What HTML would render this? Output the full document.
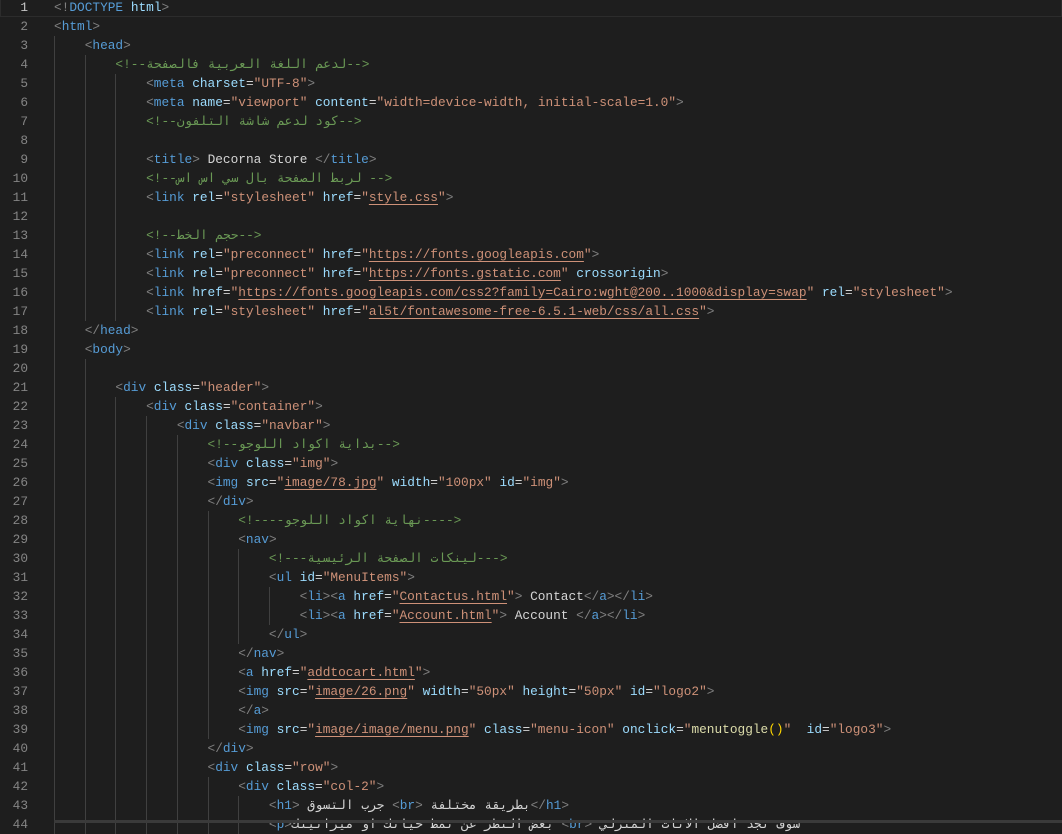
<!DOCTYPE html>
<html><head><meta charset="UTF-8">
<style>
html,body{margin:0;padding:0;background:#1e1e1e;width:1062px;height:823px;overflow:hidden}
#ed{position:absolute;left:0;top:-2px;width:1062px;font-family:"Liberation Mono","DejaVu Sans Mono","DejaVu Sans",monospace;font-size:12.8px}
.l{position:relative;height:19px;line-height:19px;white-space:pre;padding-left:54px;color:#d4d4d4}
.l b{font-weight:normal;position:absolute;left:0;width:28px;text-align:right;color:#858585}
.cur{box-shadow:inset 0 0 0 1px #2c2c2c}
.cur b{color:#c6c6c6}
i{display:inline-block;width:4ch;height:19px;vertical-align:top;box-shadow:inset 1px 0 #404040}
.g{color:#808080}.n{color:#569cd6}.a{color:#9cdcfe}.s{color:#ce9178}.c{color:#6a9955}.f{color:#dcdcaa}.y{color:#ffd700}
.u{text-decoration:underline;text-decoration-color:#ce9178;text-underline-offset:3px}
#sb{position:absolute;left:54px;right:0;top:820px;height:3px;background:#3a3a3a}
</style></head><body><div id="ed">
<div class="l cur"><b>1</b><span class="g">&lt;!</span><span class="n">DOCTYPE</span> <span class="a">html</span><span class="g">&gt;</span></div>
<div class="l"><b>2</b><span class="g">&lt;</span><span class="n">html</span><span class="g">&gt;</span></div>
<div class="l"><b>3</b><i></i><span class="g">&lt;</span><span class="n">head</span><span class="g">&gt;</span></div>
<div class="l"><b>4</b><i></i><i></i><span class="c">&lt;!--لدعم اللغة العربية فالصفحة--&gt;</span></div>
<div class="l"><b>5</b><i></i><i></i><i></i><span class="g">&lt;</span><span class="n">meta</span> <span class="a">charset</span>=<span class="s">"UTF-8"</span><span class="g">&gt;</span></div>
<div class="l"><b>6</b><i></i><i></i><i></i><span class="g">&lt;</span><span class="n">meta</span> <span class="a">name</span>=<span class="s">"viewport"</span> <span class="a">content</span>=<span class="s">"width=device-width, initial-scale=1.0"</span><span class="g">&gt;</span></div>
<div class="l"><b>7</b><i></i><i></i><i></i><span class="c">&lt;!--كود لدعم شاشة التلفون--&gt;</span></div>
<div class="l"><b>8</b><i></i><i></i><i></i></div>
<div class="l"><b>9</b><i></i><i></i><i></i><span class="g">&lt;</span><span class="n">title</span><span class="g">&gt;</span> Decorna Store <span class="g">&lt;/</span><span class="n">title</span><span class="g">&gt;</span></div>
<div class="l"><b>10</b><i></i><i></i><i></i><span class="c">&lt;!--لربط الصفحة بال سي اس اس --&gt;</span></div>
<div class="l"><b>11</b><i></i><i></i><i></i><span class="g">&lt;</span><span class="n">link</span> <span class="a">rel</span>=<span class="s">"stylesheet"</span> <span class="a">href</span>=<span class="s">"<span class="u">style.css</span>"</span><span class="g">&gt;</span></div>
<div class="l"><b>12</b><i></i><i></i><i></i></div>
<div class="l"><b>13</b><i></i><i></i><i></i><span class="c">&lt;!--حجم الخط--&gt;</span></div>
<div class="l"><b>14</b><i></i><i></i><i></i><span class="g">&lt;</span><span class="n">link</span> <span class="a">rel</span>=<span class="s">"preconnect"</span> <span class="a">href</span>=<span class="s">"<span class="u">https://fonts.googleapis.com</span>"</span><span class="g">&gt;</span></div>
<div class="l"><b>15</b><i></i><i></i><i></i><span class="g">&lt;</span><span class="n">link</span> <span class="a">rel</span>=<span class="s">"preconnect"</span> <span class="a">href</span>=<span class="s">"<span class="u">https://fonts.gstatic.com</span>"</span> <span class="a">crossorigin</span><span class="g">&gt;</span></div>
<div class="l"><b>16</b><i></i><i></i><i></i><span class="g">&lt;</span><span class="n">link</span> <span class="a">href</span>=<span class="s">"<span class="u">https://fonts.googleapis.com/css2?family=Cairo:wght@200..1000&amp;display=swap</span>"</span> <span class="a">rel</span>=<span class="s">"stylesheet"</span><span class="g">&gt;</span></div>
<div class="l"><b>17</b><i></i><i></i><i></i><span class="g">&lt;</span><span class="n">link</span> <span class="a">rel</span>=<span class="s">"stylesheet"</span> <span class="a">href</span>=<span class="s">"<span class="u">al5t/fontawesome-free-6.5.1-web/css/all.css</span>"</span><span class="g">&gt;</span></div>
<div class="l"><b>18</b><i></i><span class="g">&lt;/</span><span class="n">head</span><span class="g">&gt;</span></div>
<div class="l"><b>19</b><i></i><span class="g">&lt;</span><span class="n">body</span><span class="g">&gt;</span></div>
<div class="l"><b>20</b><i></i><i></i></div>
<div class="l"><b>21</b><i></i><i></i><span class="g">&lt;</span><span class="n">div</span> <span class="a">class</span>=<span class="s">"header"</span><span class="g">&gt;</span></div>
<div class="l"><b>22</b><i></i><i></i><i></i><span class="g">&lt;</span><span class="n">div</span> <span class="a">class</span>=<span class="s">"container"</span><span class="g">&gt;</span></div>
<div class="l"><b>23</b><i></i><i></i><i></i><i></i><span class="g">&lt;</span><span class="n">div</span> <span class="a">class</span>=<span class="s">"navbar"</span><span class="g">&gt;</span></div>
<div class="l"><b>24</b><i></i><i></i><i></i><i></i><i></i><span class="c">&lt;!--بداية اكواد اللوجو--&gt;</span></div>
<div class="l"><b>25</b><i></i><i></i><i></i><i></i><i></i><span class="g">&lt;</span><span class="n">div</span> <span class="a">class</span>=<span class="s">"img"</span><span class="g">&gt;</span></div>
<div class="l"><b>26</b><i></i><i></i><i></i><i></i><i></i><span class="g">&lt;</span><span class="n">img</span> <span class="a">src</span>=<span class="s">"<span class="u">image/78.jpg</span>"</span> <span class="a">width</span>=<span class="s">"100px"</span> <span class="a">id</span>=<span class="s">"img"</span><span class="g">&gt;</span></div>
<div class="l"><b>27</b><i></i><i></i><i></i><i></i><i></i><span class="g">&lt;/</span><span class="n">div</span><span class="g">&gt;</span></div>
<div class="l"><b>28</b><i></i><i></i><i></i><i></i><i></i><i></i><span class="c">&lt;!----نهاية اكواد اللوجو----&gt;</span></div>
<div class="l"><b>29</b><i></i><i></i><i></i><i></i><i></i><i></i><span class="g">&lt;</span><span class="n">nav</span><span class="g">&gt;</span></div>
<div class="l"><b>30</b><i></i><i></i><i></i><i></i><i></i><i></i><i></i><span class="c">&lt;!---لينكات الصفحة الرئيسية---&gt;</span></div>
<div class="l"><b>31</b><i></i><i></i><i></i><i></i><i></i><i></i><i></i><span class="g">&lt;</span><span class="n">ul</span> <span class="a">id</span>=<span class="s">"MenuItems"</span><span class="g">&gt;</span></div>
<div class="l"><b>32</b><i></i><i></i><i></i><i></i><i></i><i></i><i></i><i></i><span class="g">&lt;</span><span class="n">li</span><span class="g">&gt;&lt;</span><span class="n">a</span> <span class="a">href</span>=<span class="s">"<span class="u">Contactus.html</span>"</span><span class="g">&gt;</span> Contact<span class="g">&lt;/</span><span class="n">a</span><span class="g">&gt;&lt;/</span><span class="n">li</span><span class="g">&gt;</span></div>
<div class="l"><b>33</b><i></i><i></i><i></i><i></i><i></i><i></i><i></i><i></i><span class="g">&lt;</span><span class="n">li</span><span class="g">&gt;&lt;</span><span class="n">a</span> <span class="a">href</span>=<span class="s">"<span class="u">Account.html</span>"</span><span class="g">&gt;</span> Account <span class="g">&lt;/</span><span class="n">a</span><span class="g">&gt;&lt;/</span><span class="n">li</span><span class="g">&gt;</span></div>
<div class="l"><b>34</b><i></i><i></i><i></i><i></i><i></i><i></i><i></i><span class="g">&lt;/</span><span class="n">ul</span><span class="g">&gt;</span></div>
<div class="l"><b>35</b><i></i><i></i><i></i><i></i><i></i><i></i><span class="g">&lt;/</span><span class="n">nav</span><span class="g">&gt;</span></div>
<div class="l"><b>36</b><i></i><i></i><i></i><i></i><i></i><i></i><span class="g">&lt;</span><span class="n">a</span> <span class="a">href</span>=<span class="s">"<span class="u">addtocart.html</span>"</span><span class="g">&gt;</span></div>
<div class="l"><b>37</b><i></i><i></i><i></i><i></i><i></i><i></i><span class="g">&lt;</span><span class="n">img</span> <span class="a">src</span>=<span class="s">"<span class="u">image/26.png</span>"</span> <span class="a">width</span>=<span class="s">"50px"</span> <span class="a">height</span>=<span class="s">"50px"</span> <span class="a">id</span>=<span class="s">"logo2"</span><span class="g">&gt;</span></div>
<div class="l"><b>38</b><i></i><i></i><i></i><i></i><i></i><i></i><span class="g">&lt;/</span><span class="n">a</span><span class="g">&gt;</span></div>
<div class="l"><b>39</b><i></i><i></i><i></i><i></i><i></i><i></i><span class="g">&lt;</span><span class="n">img</span> <span class="a">src</span>=<span class="s">"<span class="u">image/image/menu.png</span>"</span> <span class="a">class</span>=<span class="s">"menu-icon"</span> <span class="a">onclick</span>=<span class="s">"</span><span class="f">menutoggle</span><span class="y">()</span><span class="s">"</span>  <span class="a">id</span>=<span class="s">"logo3"</span><span class="g">&gt;</span></div>
<div class="l"><b>40</b><i></i><i></i><i></i><i></i><i></i><span class="g">&lt;/</span><span class="n">div</span><span class="g">&gt;</span></div>
<div class="l"><b>41</b><i></i><i></i><i></i><i></i><i></i><span class="g">&lt;</span><span class="n">div</span> <span class="a">class</span>=<span class="s">"row"</span><span class="g">&gt;</span></div>
<div class="l"><b>42</b><i></i><i></i><i></i><i></i><i></i><i></i><span class="g">&lt;</span><span class="n">div</span> <span class="a">class</span>=<span class="s">"col-2"</span><span class="g">&gt;</span></div>
<div class="l"><b>43</b><i></i><i></i><i></i><i></i><i></i><i></i><i></i><span class="g">&lt;</span><span class="n">h1</span><span class="g">&gt;</span> جرب التسوق <span class="g">&lt;</span><span class="n">br</span><span class="g">&gt;</span> بطريقة مختلفة<span class="g">&lt;/</span><span class="n">h1</span><span class="g">&gt;</span></div>
<div class="l"><b>44</b><i></i><i></i><i></i><i></i><i></i><i></i><i></i><span class="g">&lt;</span><span class="n">p</span><span class="g">&gt;</span>بغض النظر عن نمط حياتك او ميزانيتك <span class="g">&lt;</span><span class="n">br</span><span class="g">&gt;</span> سوف تجد افضل الاثاث المنزلي</div>
</div>
<div id="sb"></div>
</body></html>
